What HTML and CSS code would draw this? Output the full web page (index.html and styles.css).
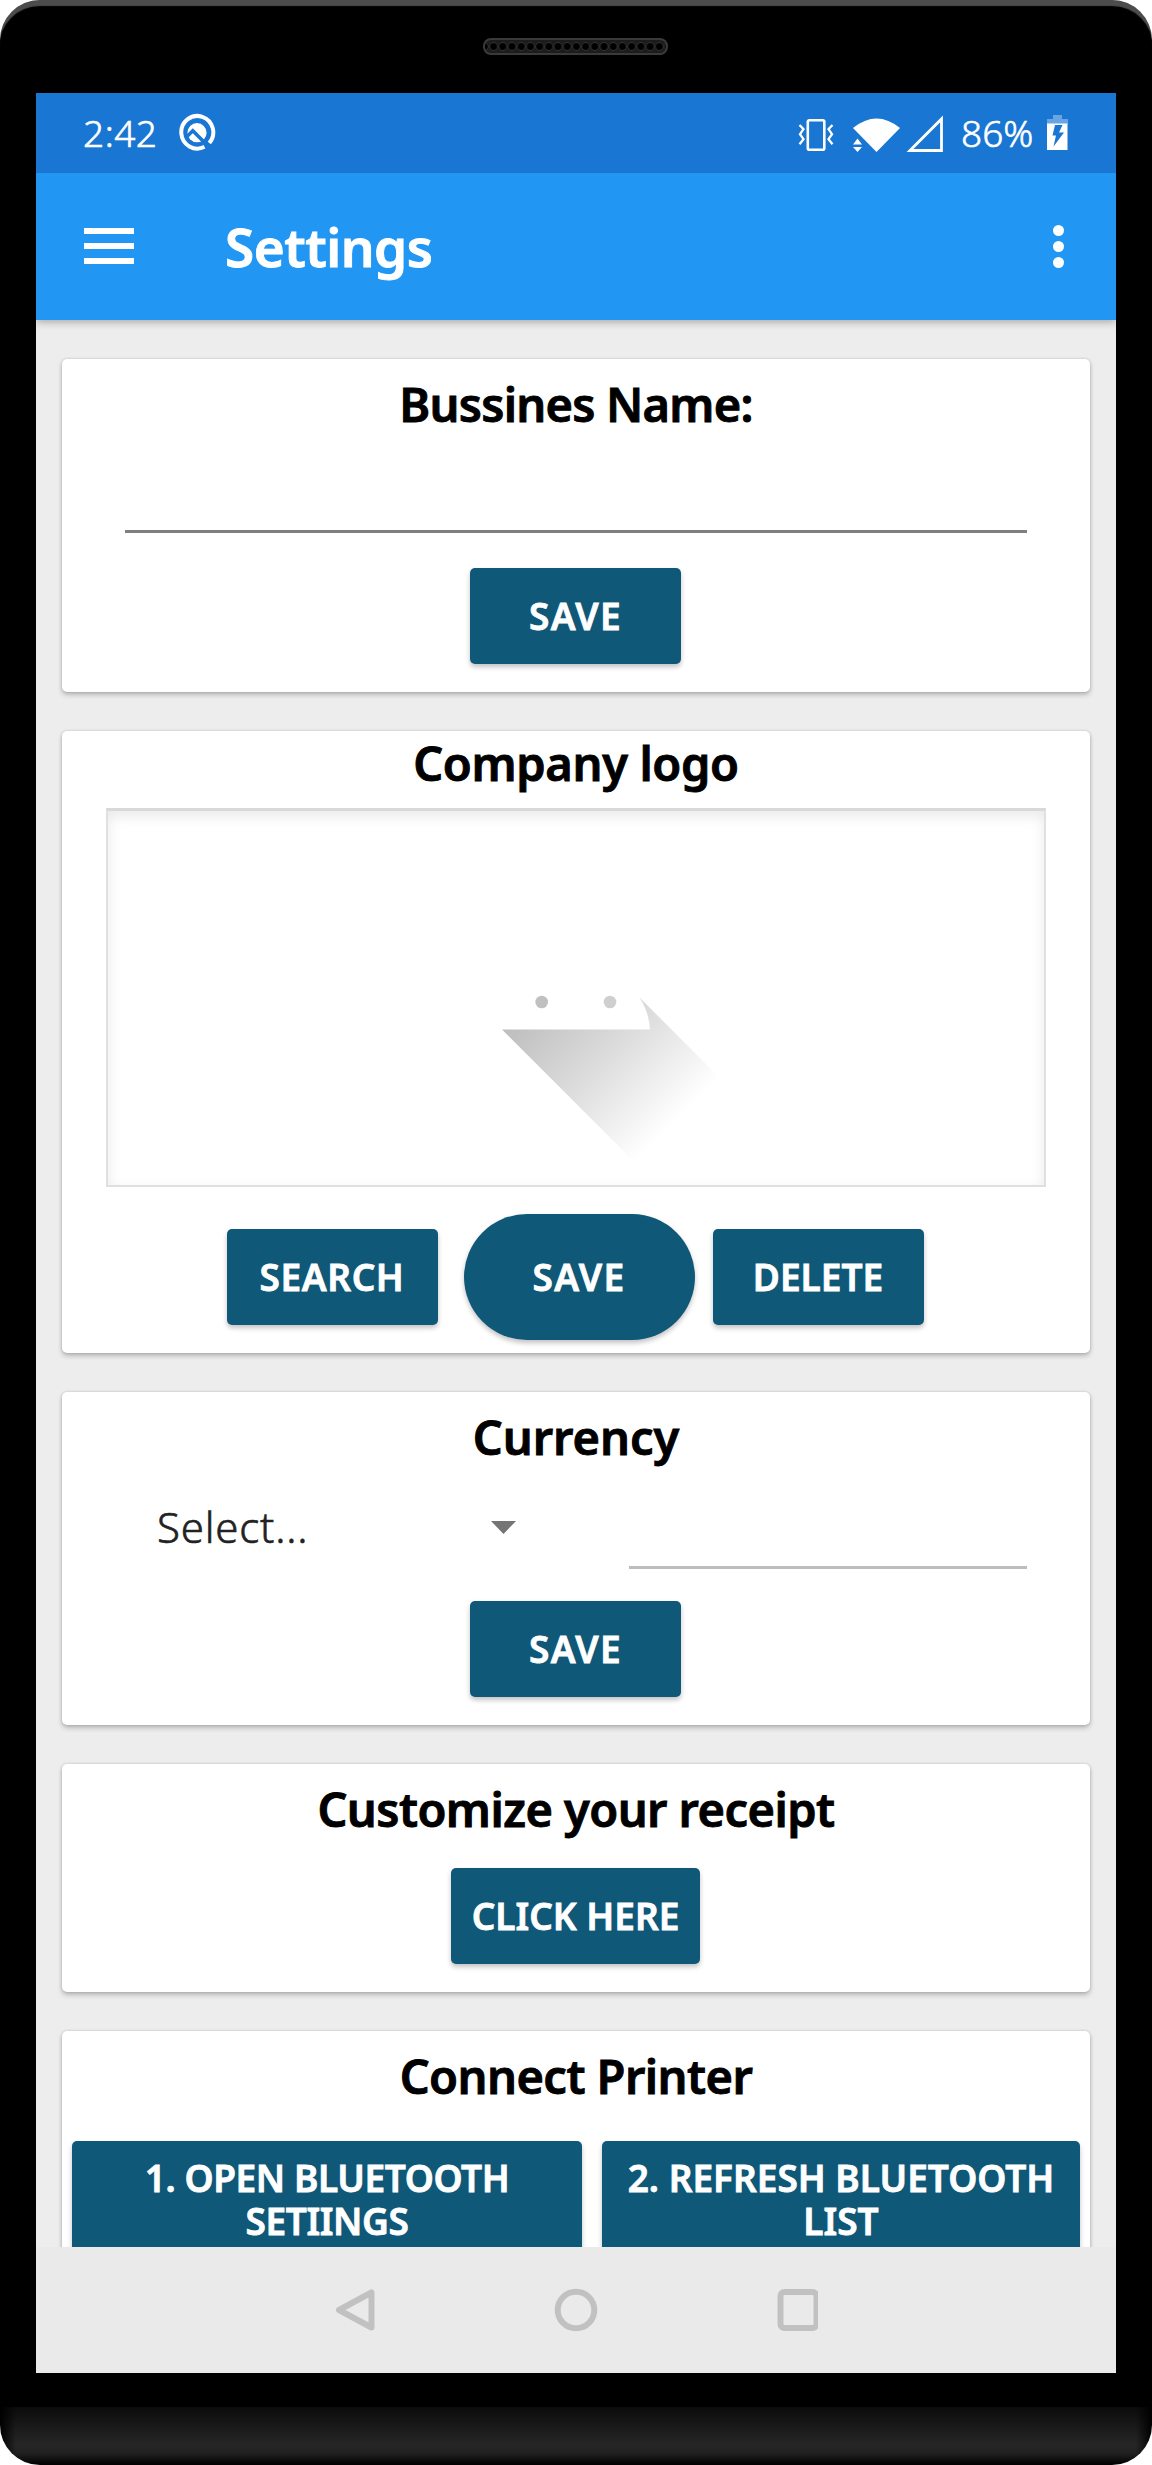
FILE: index.html
```html
<!DOCTYPE html>
<html lang="en">
<head>
<meta charset="utf-8">
<title>Settings</title>
<link rel="stylesheet" href="styles.css">
</head>
<body>
<div class="device">
  <div class="bezel-top"><div class="speaker"></div></div>
  <div class="screen">
    <div class="status">
      <span class="clock">2:42</span>
      <svg class="q" width="38" height="42" viewBox="0 0 38 42" fill="none">
        <path d="M26.500 33.800A16 16.300 0 1 1 31.300 30" stroke="#fff" stroke-width="4"/>
        <circle cx="19" cy="19.700" r="9.600" fill="#fff"/>
        <path d="M8 24.500l6.800-6.700L29 32" stroke="#1976d3" stroke-width="3.500"/>
      </svg>
      <span class="spacer"></span>
      <svg width="146" height="42" viewBox="0 0 146 42" fill="none" class="signals">
        <rect x="10.800" y="5.300" width="16.500" height="29.500" rx="1.500" stroke="#fff" stroke-width="2.600"/>
        <path d="M2.500 10l4 4.200-3.500 5 3.500 5-4 5M35.500 10l-4 4.200 3.500 5-3.500 5 4 5" stroke="#fff" stroke-width="2.300"/>
        <path d="M56 13Q79.500-6 103 13L79.500 37Z" fill="#fff"/>
        <path d="M56 29.500h9l-4.500-6zM56 32h9l-4.500 5z" fill="#fff"/>
        <path d="M113 35.500L144.500 4v31.500z" stroke="#fff" stroke-width="2.800"/>
      </svg>
      <span class="percent">86%</span>
      <svg class="battery" width="21" height="36" viewBox="0 0 21 36">
        <path d="M6 0h9v4h6v5H0V4h6z" fill="#69a5e2"/>
        <path d="M0 8.500h20.500V35H0z" fill="#fff"/>
        <path d="M8 10h7.500l-3.500 7.500h5L6.500 31.500l2.500-11H5.500z" fill="#1976d3"/>
      </svg>
    </div>
    <div class="toolbar">
      <div class="menu"><i></i><i></i><i></i></div>
      <h1>Settings</h1>
      <span class="spacer"></span>
      <div class="more"><i></i><i></i><i></i></div>
    </div>
    <main class="content">
      <section class="card">
        <h2 class="name-title">Bussines Name:</h2>
        <div class="field"></div>
        <button class="btn save name-save">SAVE</button>
      </section>
      <section class="card logo-card">
        <h2 class="logo-title">Company logo</h2>
        <div class="picture">
          <svg width="940" height="379" viewBox="106 808 940 379">
            <defs>
              <linearGradient id="fade" gradientUnits="userSpaceOnUse" x1="502" y1="1029" x2="635.500" y2="1162.500">
                <stop offset="0" stop-color="#000" stop-opacity=".26"/>
                <stop offset=".5" stop-color="#000" stop-opacity=".135"/>
                <stop offset="1" stop-color="#000" stop-opacity="0"/>
              </linearGradient>
            </defs>
            <circle cx="541.700" cy="1002" r="6.300" fill="#c0c0c0"/>
            <circle cx="610" cy="1002" r="6.300" fill="#cfcfcf"/>
            <path d="M502 1029.500H650Q649 1012 639.500 997.500L740 1098L650 1177.500Z" fill="url(#fade)"/>
          </svg>
        </div>
        <div class="actions">
          <button class="btn search">SEARCH</button>
          <button class="btn save pill">SAVE</button>
          <button class="btn">DELETE</button>
        </div>
      </section>
      <section class="card">
        <h2>Currency</h2>
        <div class="currency">
          <div class="select"><span>Select...</span><svg width="25" height="13" viewBox="0 0 25 13"><path d="M0 0h25L12.500 13z" fill="#757575"/></svg></div>
          <div class="amount"></div>
        </div>
        <button class="btn save currency-save">SAVE</button>
      </section>
      <section class="card">
        <h2 class="receipt-title">Customize your receipt</h2>
        <button class="btn click">CLICK HERE</button>
      </section>
      <section class="card printer-card">
        <h2 class="printer-title">Connect Printer</h2>
        <div class="printer">
          <button class="btn tall open">1. OPEN BLUETOOTH<br>SETIINGS</button>
          <button class="btn tall">2. REFRESH BLUETOOTH<br>LIST</button>
        </div>
      </section>
    </main>
    <nav class="nav">
      <svg width="484" height="44" viewBox="0 0 484 44" fill="none" stroke="#c1c1c1" stroke-width="6" stroke-linejoin="round">
        <path d="M37.500 4.500v35L5 22z"/>
        <circle cx="242" cy="22" r="18.300"/>
        <rect x="446.500" y="4" width="36" height="36" rx="4"/>
      </svg>
    </nav>
  </div>
</div>
</body>
</html>
```
FILE: styles.css
```css
* { box-sizing: border-box; }
body { margin: 0; background: #fff; font-family: "Noto Sans", sans-serif; }
h1, h2 { margin: 0; font-weight: 600; -webkit-text-stroke: 0.9px; }
.spacer { flex: 1; }

.device {
  height: 2465px;
  padding: 0 36px;
  display: flex;
  flex-direction: column;
  border-radius: 40px;
  background:
    linear-gradient(90deg, #000, transparent 16px, transparent 1136px, #000) 0 2407px / 100% 58px no-repeat,
    linear-gradient(#0b0b0b, #262626 65%, #202020 80%, #000) 0 2407px / 100% 58px no-repeat,
    #000;
  box-shadow: inset 0 7px 1px -1px #4c4c4c;
}
.bezel-top { height: 93px; display: flex; justify-content: center; padding: 38px 1px 0 0; }
.speaker {
  width: 185px; height: 17px;
  border-radius: 8px;
  border: 2px solid #3a3a3a;
  background: radial-gradient(circle at 4.600px 50%, #000 3px, #333 4px, #1c1c1c 4.600px) 4px 0 / 9.210px 100% #1a1a1a;
}
.screen { height: 2280px; display: flex; flex-direction: column; background: #ededed; }

.status { height: 80px; flex: none; background: #1976d3; color: #fff; display: flex; align-items: flex-start; padding: 20px 49px 0 47px; font-size: 37px; line-height: 40px; font-weight: 300; -webkit-text-stroke: 0.6px; }
.clock { width: 77px; letter-spacing: 0.5px; }
.q { margin: 0 0 0 18px; }
.signals { margin: 2px 18px 0 0; }
.percent { width: 72px; margin-right: 14px; }
.battery { margin: 2px -1px 0 0; }

.toolbar { height: 147px; flex: none; background: #2196f3; color: #fff; display: flex; align-items: center; padding: 0 52px 0 48px; box-shadow: 0 2px 8px rgba(0,0,0,.3); clip-path: inset(0 0 -12px 0); }
.toolbar h1 { margin-left: 91px; font-size: 53px; line-height: 60px; letter-spacing: -0.5px; }
.menu { display: grid; gap: 9px; width: 50px; padding-bottom: 1px; }
.menu i { height: 6px; background: #fff; }
.more { display: grid; gap: 5px; }
.more i { width: 11px; height: 11px; border-radius: 50%; background: #fff; }

.content { height: 1927px; flex: none; overflow: hidden; padding: 39px 26px 0; display: flex; flex-direction: column; gap: 39px; }
.card { background: #fff; border-radius: 5px; padding: 15px 0 28px; flex: none; display: flex; flex-direction: column; align-items: center; box-shadow: 0 3px 5px rgba(0,0,0,.22), 0 0 3px rgba(0,0,0,.18); }
.card h2 { font-size: 47px; line-height: 60px; color: #000; white-space: nowrap; }
.card .name-title { letter-spacing: -0.75px; }
.card .logo-title { letter-spacing: -0.35px; }
.card .receipt-title { letter-spacing: -0.55px; }
.card .printer-title { letter-spacing: -0.55px; }

.btn { font: 600 37px/43px "Noto Sans", sans-serif; -webkit-text-stroke: 0.8px; color: #fff; background: #105878; border: 0; border-radius: 5px; width: 211px; height: 96px; padding: 0 0 2px; white-space: nowrap; box-shadow: 0 3px 5px rgba(0,0,0,.24); }
.save { letter-spacing: 1.3px; }
.search { letter-spacing: 0.6px; }
.field { width: 902px; height: 99px; border-bottom: 3px solid #7f7f7f; }
.name-save { margin: 35px 1px 0 0; }

.logo-card { padding: 2px 0 13px; }
.picture { width: 940px; height: 379px; margin-top: 15px; border: 2px solid #e0e0e0; border-top: 3px solid #d8d8d8; box-shadow: inset 0 5px 14px rgba(0,0,0,.09); display: flex; }
.picture svg { margin: -3px -2px -2px; flex: none; }
.actions { display: flex; align-items: center; height: 126px; margin: 27px 2px 0 0; }
.pill { width: 231px; height: 126px; border-radius: 63px; margin: 0 18px 0 26px; }

.currency { width: 902px; height: 102px; display: flex; justify-content: space-between; }
.select { width: 391px; padding: 18px 0 0 32px; display: flex; justify-content: space-between; align-items: center; font-size: 42px; line-height: 60px; font-weight: 300; -webkit-text-stroke: 0.6px; letter-spacing: 0.8px; color: #222; }
.amount { width: 398px; border-bottom: 3px solid #bdbdbd; }
.currency-save { margin: 32px 1px 0 0; }
.click { width: 249px; margin: 29px 1px 0 0; }

.printer-card { height: 300px; }
.printer { width: 1008px; margin-top: 35px; display: grid; grid-template-columns: 510px 478px; gap: 20px; }
.tall { width: 100%; height: 140px; display: block; padding: 0 0 24px; }
.open { letter-spacing: -0.4px; }

.nav { height: 126px; flex: none; background: #eaeaea; display: flex; justify-content: center; align-items: center; }
```
